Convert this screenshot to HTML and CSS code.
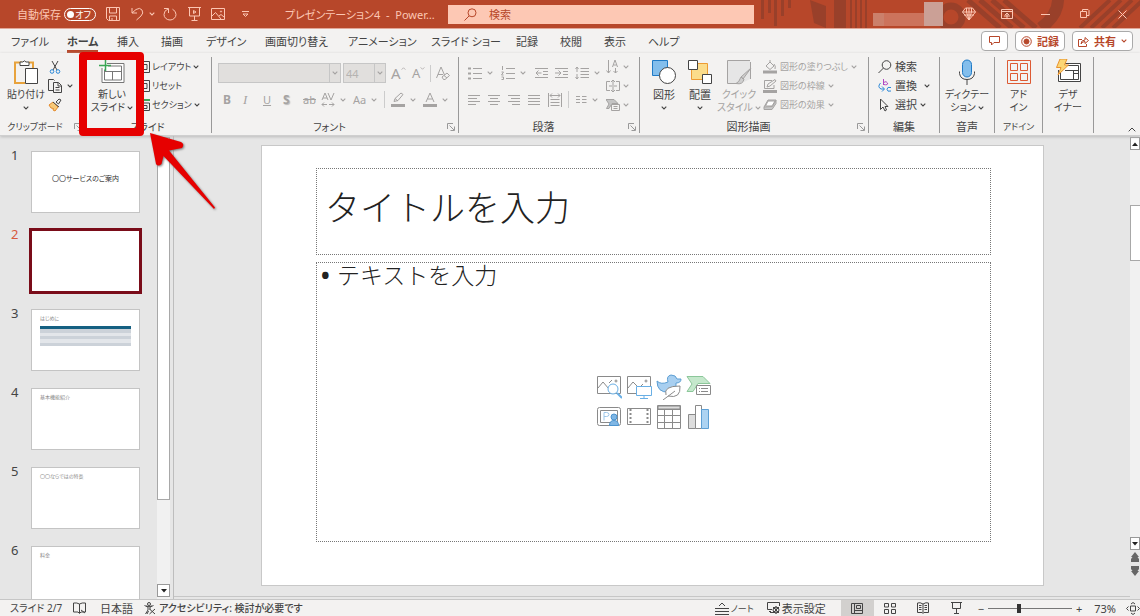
FILE: index.html
```html
<!DOCTYPE html>
<html lang="ja">
<head>
<meta charset="utf-8">
<title>プレゼンテーション4 - PowerPoint</title>
<link rel="stylesheet" href="styles.css">
</head>
<body>
<svg class="defs" aria-hidden="true">
  <symbol id="chev" viewBox="0 0 6 4"><path d="M.7.7 3 3 5.300.7" fill="none" stroke="currentColor" stroke-width="1.1"/></symbol>
  <symbol id="launch" viewBox="0 0 8 8"><path d="M.5 6V.5H6M2.500 2.500 7 7M7.500 3.500v4h-4" fill="none" stroke="currentColor"/></symbol>
</svg>
<div class="app">
  <header class="titlebar">
    <svg class="pattern" viewBox="0 0 390 28" aria-hidden="true">
      <g fill="#99402a"><path d="M11 0h3v19h-3zM18 0h3v13h-3zM24 0h3v26h-3zM31 0h3v16h-3zM38 0h3v8h-3zM60 0l16 6v22l-12-5zM84 0h12v28H84zM100 0h2v28h-2zM105 0h2v28h-2zM110 0h2v28h-2zM115 0h2v28h-2z"/></g>
      <g fill="none" stroke="#99402a"><circle cx="201" cy="17" r="11" stroke-width="7"/><path d="M218 0l32 28M230 0l32 28M242 0l32 28M254 0l32 28" stroke-width="5"/><path d="M308-2q1 16-17 30" stroke-width="12"/><path d="M330 28L360 0M341 28L371 0M352 28L382 0M363 28L393 0" stroke-width="4"/></g>
    </svg>
    <div class="quick">
      <label class="autosave">自動保存
        <input type="checkbox" class="sr"><span class="toggle"><i></i>オフ</span></label>
      <button aria-label="上書き保存"><svg width="14" height="14" viewBox="0 0 14 14"><path d="M.5.5h13v13h-11l-2-2zM3.500.5V6h7V.5M3.500 13.500V9h7v4.500M6 13v-2"/></svg></button>
      <button aria-label="元に戻す"><svg width="13" height="14" viewBox="0 0 13 14"><path d="M1 1v5h5M1 6l4-3.500q4-2.500 6 .5t-1 6L5.500 13"/></svg></button>
      <button aria-label="元に戻すの一覧"><svg class="c"><use href="#chev"/></svg></button>
      <button aria-label="やり直し"><svg width="14" height="14" viewBox="0 0 14 14"><path d="M1 1.500h4.500V6M5 2Q1 3.500 1 7.500A6 5.500 0 0 0 13 7.500Q13 4 9.500 2.200"/></svg></button>
      <button aria-label="先頭から開始"><svg width="13" height="14" viewBox="0 0 13 14"><path d="M0 .5h13M1.500 1v8h10V1M6.500 9v4M3.500 13.500h6M5.500 3.500v3l2.500-1.500z"/></svg></button>
      <button aria-label="図を挿入"><svg width="14" height="12" viewBox="0 0 14 12"><path d="M.5.5h13v11H.5zM1 8l3.500-3.500L10 11M8 8l2-1.500L13 9"/><circle cx="10" cy="3.500" r=".6"/></svg></button>
      <button aria-label="クイック アクセスのカスタマイズ"><svg width="7" height="7" viewBox="0 0 7 7"><path d="M0 .5h7M1 3l2.500 2.500L6 3z"/></svg></button>
      <span class="doc">プレゼンテーション4&nbsp; -&nbsp; Power…</span>
    </div>
    <label class="search"><svg width="13" height="13" viewBox="0 0 13 13"><circle cx="8" cy="4.800" r="4"/><path d="M5 8L.5 12.500"/></svg><input type="search" aria-label="検索" placeholder="検索"></label>
    <div class="winctl">
      <span class="account"><i></i><i></i><i></i></span>
      <button aria-label="Premium"><svg width="14" height="14" viewBox="0 0 14 14"><path d="M3.500 1h7L13.500 5 7 13 .5 5zM.5 5h13M4.500 1v4L7 13l2.500-8V1M7 1v12M2 8h10"/></svg></button>
      <button aria-label="リボンの表示オプション"><svg width="12" height="10" viewBox="0 0 12 10"><path d="M.5.5h11v9H.5zM.5 2.500h11M6 9V4M4 6l2-2 2 2M3 7h6"/></svg></button>
      <button aria-label="最小化"><svg width="9" height="9" viewBox="0 0 9 9"><path d="M0 4.500h9"/></svg></button>
      <button aria-label="元に戻す(縮小)"><svg width="10" height="10" viewBox="0 0 10 10"><path d="M.5 2.500h6v6h-6zM2.500 2V.5H8l1 1v5H7"/></svg></button>
      <button aria-label="閉じる"><svg width="9" height="9" viewBox="0 0 9 9"><path d="M.5.5l8 8M8.500.5l-8 8"/></svg></button>
    </div>
  </header>

  <nav class="tabs">
    <div class="tablist">
      <a href="#">ファイル</a><a href="#" class="on">ホーム</a><a href="#">挿入</a><a href="#">描画</a><a href="#">デザイン</a><a href="#">画面切り替え</a><a href="#">アニメーション</a><a href="#">スライド ショー</a><a href="#">記録</a><a href="#">校閲</a><a href="#">表示</a><a href="#">ヘルプ</a>
    </div>
    <div class="actions">
      <button aria-label="コメント"><svg width="11" height="10" viewBox="0 0 11 10"><path d="M.5.5h10v6H5L2.500 9V6.500h-2z"/></svg></button>
      <button><svg width="11" height="11" viewBox="0 0 11 11"><circle cx="5.500" cy="5.500" r="4.800"/><circle cx="5.500" cy="5.500" r="2.500" fill="currentColor"/></svg>記録</button>
      <button><svg width="11" height="11" viewBox="0 0 11 11"><path d="M4 3.500H.5v7h8V8M3 8q0-4 4-4V1.500l3.500 3L7 7.500V5.500Q4.500 5.500 3 8z"/></svg>共有<svg class="c"><use href="#chev"/></svg></button>
    </div>
  </nav>

  <section class="ribbon">
    <div class="group g-clip">
      <div class="body">
        <button class="big"><svg width="26" height="26" viewBox="0 0 26 26"><path d="M9 3.500H2v20.500h10M16 3.500h4V9" stroke="#e8a33d" stroke-width="2"/><path d="M7 6.500V3h3q1-2.500 3 0h3v3.500z" fill="#fff"/><path d="M12.500 9.500h12v15h-12z" fill="#fff"/></svg>貼り付け<svg class="c low"><use href="#chev"/></svg></button>
        <div class="stack">
          <button aria-label="切り取り"><svg width="14" height="14" viewBox="0 0 14 14"><path d="M4 1l5 9M10 1L5 10"/><circle cx="4" cy="11.500" r="1.800" stroke="#2b88d8"/><circle cx="10" cy="11.500" r="1.800" stroke="#2b88d8"/></svg></button>
          <button aria-label="コピー"><svg width="14" height="14" viewBox="0 0 14 14"><path d="M5 11.500H.5V.5h5l1 1M5.500 3.500h5l3 3v7h-8zM10 4v3h3M7.500 8.500h4M7.500 11h4"/></svg><svg class="c"><use href="#chev"/></svg></button>
          <button aria-label="書式のコピー"><svg width="14" height="14" viewBox="0 0 14 14"><path d="M8 4l3-3 2 1-2.500 4z" /><path d="M1 7l4-3 5 5-3 4-2-1 .5-1.500L3 10z" fill="#f7c978" stroke="#e58a2a"/><path d="M5 4l6 5"/></svg></button>
        </div>
      </div>
      <div class="cap"><span>クリップボード</span><svg class="l"><use href="#launch"/></svg></div>
    </div>
    <div class="group g-slide">
      <div class="body">
        <button class="big"><svg width="26" height="26" viewBox="0 0 26 26"><path d="M8 4.500h17v19H3V9" fill="#fff" stroke="#777"/><path d="M5.500 10.500v10.500h17V7H9M5.500 12.500h17M13.500 12.500V21" stroke="#777"/><path d="M0 6.500h12M6.500 1v11" stroke="#3aa655" stroke-width="1.500"/></svg>新しい<span>スライド<svg class="c"><use href="#chev"/></svg></span></button>
        <div class="stack">
          <button><svg width="10" height="12" viewBox="0 0 10 12"><path d="M0 .5h9.500v11H0M0 3.500h7v5H0"/></svg>レイアウト<svg class="c"><use href="#chev"/></svg></button>
          <button><svg width="10" height="12" viewBox="0 0 10 12"><path d="M0 .5h9.500v11H0M0 3.500h7v5H0"/></svg>リセット</button>
          <button><svg width="10" height="12" viewBox="0 0 10 12"><path d="M0 1h10" stroke="#3aa655" stroke-width="2"/><path d="M0 4h9.500v7.500H0M0 6.500h7v3H0"/></svg>セクション<svg class="c"><use href="#chev"/></svg></button>
        </div>
      </div>
      <div class="cap"><span>スライド</span></div>
    </div>
    <div class="group g-font off">
      <div class="body">
        <div class="frow1">
          <span class="sel"><select aria-label="フォント"><option></option></select><svg class="c"><use href="#chev"/></svg></span>
          <span class="sel"><select aria-label="フォント サイズ"><option>44</option></select><svg class="c"><use href="#chev"/></svg></span>
          <button aria-label="フォント サイズの拡大"><b class="ga">A</b><svg class="up" width="5" height="3" viewBox="0 0 6 4"><path d="M.5 3.500L3 1l2.500 2.500"/></svg></button>
          <button aria-label="フォント サイズの縮小"><b class="gb">A</b><svg class="up" width="5" height="3" viewBox="0 0 6 4"><path d="M.5.5L3 3 5.500.5"/></svg></button>
          <i class="sep"></i>
          <button aria-label="書式のクリア"><svg width="14" height="15" viewBox="0 0 14 15"><path d="M.5 12L5 1l3.500 8M2 8.500h5M6 11l5-4 2.500 2.500-4.500 4H7.500zM8 9.500l3 2.500" /></svg></button>
        </div>
        <div class="frow2">
          <button aria-label="太字"><b class="tb">B</b></button><button aria-label="斜体"><i class="ti">I</i></button><button aria-label="下線"><u>U</u></button><button aria-label="影"><b class="ts">S</b></button><button aria-label="取り消し線"><s>ab</s></button>
          <button aria-label="文字の間隔"><svg width="14" height="15" viewBox="0 0 14 15"><path d="M1 8L4 1l3 7M2 6h4M7 1l3 7 3-7M1 12.500h5M8 12.500h5M3 10.500l-2 2 2 2M11 10.500l2 2-2 2"/></svg><svg class="c"><use href="#chev"/></svg></button>
          <button aria-label="文字種の変換">Aa<svg class="c"><use href="#chev"/></svg></button><i class="sep"></i>
          <button aria-label="蛍光ペン"><svg width="14" height="15" viewBox="0 0 14 15"><path d="M0 13.500h14" stroke-width="3"/><path d="M3 9.500l1-3 6-5.500 2 1.500-5 6zM4 6.500L7 9"/></svg><svg class="c"><use href="#chev"/></svg></button>
          <button aria-label="フォントの色"><svg width="14" height="15" viewBox="0 0 14 15"><path d="M0 13.500h14" stroke-width="3"/><path d="M3 10L7 1l4 9M4.500 7h5"/></svg><svg class="c"><use href="#chev"/></svg></button>
        </div>
      </div>
      <div class="cap"><span>フォント</span><svg class="l"><use href="#launch"/></svg></div>
    </div>
    <div class="group g-para off">
      <div class="body">
        <div class="prows">
          <div class="prow1">
            <button aria-label="箇条書き"><svg width="14" height="14" viewBox="0 0 14 14"><path d="M0 2.500h3M0 7.500h3M0 12.500h3" stroke-width="2"/><path d="M5 2.500h9M5 7.500h9M5 12.500h9"/></svg><svg class="c"><use href="#chev"/></svg></button>
            <button aria-label="段落番号"><svg width="14" height="14" viewBox="0 0 14 14"><path d="M1.500 0v4M.5 6h2l-2 3h2M.5 11h2v2.500h-2M5 2.500h9M5 7.500h9M5 12.500h9"/></svg><svg class="c"><use href="#chev"/></svg></button>
            <button aria-label="インデントを減らす"><svg width="13" height="12" viewBox="0 0 13 12"><path d="M0 1.500h13M8 4.500h5M8 7.500h5M0 10.500h13M1 6h5.500M3.500 3.500L1 6l2.500 2.500"/></svg></button>
            <button aria-label="インデントを増やす"><svg width="13" height="12" viewBox="0 0 13 12"><path d="M0 1.500h13M8 4.500h5M8 7.500h5M0 10.500h13M0 6h6M3.500 3.500L6 6 3.500 8.500"/></svg></button>
            <button aria-label="行間"><svg width="14" height="14" viewBox="0 0 14 14"><path d="M5.500 2.500H14M5.500 5.500H14M5.500 8.500H14M5.500 11.500H14M2 1v5M.5 3L2 1l1.500 2M2 8v5M.5 11L2 13l1.500-2"/></svg><svg class="c"><use href="#chev"/></svg></button>
          </div>
          <div class="prow2">
            <button aria-label="左揃え"><svg width="13" height="12" viewBox="0 0 13 12"><path d="M0 1.500h12M0 4.500h9M0 7.500h12M0 10.500h8"/></svg></button>
            <button aria-label="中央揃え"><svg width="13" height="12" viewBox="0 0 13 12"><path d="M0 1.500h12M2 4.500h8M0 7.500h12M2 10.500h8"/></svg></button>
            <button aria-label="右揃え"><svg width="13" height="12" viewBox="0 0 13 12"><path d="M0 1.500h12M3 4.500h9M0 7.500h12M4 10.500h8"/></svg></button>
            <button aria-label="両端揃え"><svg width="13" height="12" viewBox="0 0 13 12"><path d="M0 1.500h12M0 4.500h12M0 7.500h12M0 10.500h12"/></svg></button>
            <button aria-label="均等割り付け"><svg width="14" height="14" viewBox="0 0 14 14"><path d="M.5 0v14M13.500 0v14M2 2.500h10M4 .5l-2 2 2 2M10 .5l2 2-2 2M2.500 6.500h9M2.500 9.500h9M2.500 12.500h9"/></svg></button>
            <i class="sep"></i>
            <button aria-label="段組み"><svg width="11" height="8" viewBox="0 0 11 8"><path d="M0 .5h4M6 .5h4.500M0 3.500h4M6 3.500h4.500M0 6.500h4M6 6.500h4.500"/></svg><svg class="c"><use href="#chev"/></svg></button>
          </div>
        </div>
        <div class="stack">
          <button aria-label="文字列の方向"><svg width="14" height="14" viewBox="0 0 14 14"><path d="M2.500 0v13M.5 10.500l2 2.500 2-2.500M9.500 8v5M7.500 11l2 2 2-2M6.500 7L9 0l2.500 7M7.500 5h3"/></svg><svg class="c"><use href="#chev"/></svg></button>
          <button aria-label="文字の配置"><svg width="14" height="14" viewBox="0 0 14 14"><path d="M4 2.500H.5v9H4M10 2.500h3.500v9H10M7 1v5M5 3l2-2 2 2M7 8v5M5 11l2 2 2-2M3 7h8"/></svg><svg class="c"><use href="#chev"/></svg></button>
          <button aria-label="SmartArt に変換"><svg width="14" height="12" viewBox="0 0 14 12"><path d="M0 .5h8l4 4H6l-3 5H.5L3 5z" fill="#c4c4c4"/><path d="M5.500 5.500h8v6h-8zM7.500 7.500h4M7.500 9.500h4" fill="#f3f2f1"/></svg><svg class="c"><use href="#chev"/></svg></button>
        </div>
      </div>
      <div class="cap"><span>段落</span><svg class="l"><use href="#launch"/></svg></div>
    </div>
    <div class="group g-draw">
      <div class="body">
        <button class="big"><svg width="26" height="26" viewBox="0 0 26 26"><path d="M1.500 1.500h15v15h-15z" fill="#83beec" stroke="#1f7ac6"/><circle cx="16.500" cy="16.500" r="8" fill="#fff"/></svg><span class="kanji">図形</span><svg class="c low"><use href="#chev"/></svg></button>
        <button class="big"><svg width="26" height="26" viewBox="0 0 26 26"><path d="M4.500 4.500h16v16h-16z" fill="#fbdc8b" stroke="#ed9b33"/><path d="M1.500 1.500h9v9h-9zM15.500 15.500h9v9h-9z" fill="#fff"/></svg><span class="kanji">配置</span><svg class="c low"><use href="#chev"/></svg></button>
        <button class="big off"><svg width="26" height="26" viewBox="0 0 26 26"><path d="M24 1.500H1.500v23h9M24.500 3v17" fill="none"/><path d="M2 2h22v18l-8 4H2z" fill="#e6e6e6" stroke="none"/><path d="M25 9l-8 11-2-2zM15 18l3 2q-1 6-8 4.500 3-1 5-6.500z" fill="#cfcfcf"/></svg>クイック<span>スタイル<svg class="c"><use href="#chev"/></svg></span></button>
        <div class="stack off">
          <button><svg width="14" height="14" viewBox="0 0 14 14"><path d="M0 12h14" stroke-width="3"/><path d="M3 6l4-4 4 4-4 3.500zM7 2V0M11 4q2 2 1 5"/></svg>図形の塗りつぶし<svg class="c"><use href="#chev"/></svg></button>
          <button><svg width="14" height="14" viewBox="0 0 14 14"><path d="M0 12.500h14" stroke-width="3"/><path d="M9 1.500H1.500v8H11V6M4 8l1-3 7-4.500L13 2 7 7z"/></svg>図形の枠線<svg class="c"><use href="#chev"/></svg></button>
          <button><svg width="14" height="14" viewBox="0 0 14 14"><path d="M1 9l4-7h8L9.500 8.500zM1 9v2.500h8l4-6V2" fill="#c8c8c8"/><path d="M5 3h7L9 8H2.500z" fill="#fff"/></svg>図形の効果<svg class="c"><use href="#chev"/></svg></button>
        </div>
      </div>
      <div class="cap kanji"><span>図形描画</span><svg class="l"><use href="#launch"/></svg></div>
    </div>
    <div class="group g-edit">
      <div class="body"><div class="stack">
        <button><svg width="14" height="14" viewBox="0 0 14 14"><circle cx="8.500" cy="5" r="4.300"/><path d="M5.500 8L.5 13"/></svg>検索</button>
        <button><svg width="14" height="14" viewBox="0 0 14 14"><path d="M5.500 0v6M5.500 3.500q3-2 4 .5T5.500 5.500" stroke="#b146c2"/><path d="M13 8.500q-4-1-4 1.800t4 1.700M2.500 4Q-1 8 3 10h3M4 7.500L6.500 10 4 12.500" stroke="#2b88d8"/></svg>置換<svg class="c far"><use href="#chev"/></svg></button>
        <button><svg width="14" height="14" viewBox="0 0 14 14"><path d="M2.500 1v10.500L5 9l2 4 1.500-1-1.500-3.500h3z"/></svg>選択<svg class="c"><use href="#chev"/></svg></button>
      </div></div>
      <div class="cap"><span>編集</span></div>
    </div>
    <div class="group g-voice">
      <div class="body"><button class="big"><svg width="26" height="26" viewBox="0 0 26 26"><rect x="8.500" y="1" width="9" height="17" rx="4.500" fill="#83beec" stroke="#1f7ac6"/><path d="M5.500 12.500v2q1 6 7.500 6t7.500-6v-2M13 20.500V26"/></svg>ディクテー<span>ション<svg class="c"><use href="#chev"/></svg></span></button></div>
      <div class="cap"><span>音声</span></div>
    </div>
    <div class="group g-addin">
      <div class="body"><button class="big"><svg width="26" height="26" viewBox="0 0 26 26"><path d="M1.500 1.500h23v23h-23zM4.500 4.500h7v7h-7zM14.500 4.500h7v7h-7zM4.500 14.500h7v7h-7zM14.500 14.500h7v7h-7z" stroke="#dd5a33"/></svg>アド<span>イン</span></button></div>
      <div class="cap"><span>アドイン</span></div>
    </div>
    <div class="group g-design">
      <div class="body"><button class="big"><svg width="26" height="26" viewBox="0 0 26 26"><path d="M3.500 11v11.500h22v-18H10" fill="#fff"/><path d="M5.500 13v7.500h18V6.500H11M10 11.500h13M18.500 11.500v9M18.500 14.500h5"/><path d="M5 0h7L9.500 6h4L3 16l3-7.500H1.500z" fill="#fbd675" stroke="#e8912d"/></svg>デザ<span>イナー</span></button></div>
      <div class="cap"></div>
    </div>
    <button class="collapse" aria-label="リボンを折りたたむ"><svg width="8" height="5" viewBox="0 0 8 5"><path d="M.7 4.300L4 1l3.300 3.300"/></svg></button>
    <div class="mark" aria-hidden="true"></div>
    <svg class="arrow" width="70" height="80" viewBox="0 0 70 80" aria-hidden="true"><path d="M1 1L32 10Q36 12 33 16L20 18.500 66 75.500 65 77 14.500 24 12.500 32Q9 35 7 32z"/></svg>
  </section>

  <main class="work">
    <aside class="panel">
      <ol class="thumbs">
        <li><span>1</span><div class="th cover">〇〇サービスのご案内</div></li>
        <li class="cur"><span>2</span><div class="th"></div></li>
        <li><span>3</span><div class="th">はじめに<div class="tbl"><i></i><i></i><i></i><i></i><i></i><i></i></div></div></li>
        <li><span>4</span><div class="th">基本機能紹介</div></li>
        <li><span>5</span><div class="th">〇〇ならではの特長</div></li>
        <li><span>6</span><div class="th">料金</div></li>
      </ol>
      <div class="vbar"><i class="knob"></i><button aria-label="下へ"><svg width="6" height="4" viewBox="0 0 6 4"><path d="M0 0h6L3 3.500z"/></svg></button></div>
    </aside>
    <section class="canvas">
      <article class="slide">
        <h1 class="ph">タイトルを入力</h1>
        <div class="ph content">
          <ul><li>テキストを入力</li></ul>
          <div class="inserts">
            <button aria-label="ストック画像"><svg width="26" height="24" viewBox="0 0 26 24"><path d="M1.500 1.500h23v17h-23zM2 13l5-6 6 7M13 8l3-3"/><circle cx="20" cy="6" r="1"/><circle cx="17" cy="14" r="5" fill="#fff" stroke="#69afe5"/><path d="M21 18l5 5" stroke="#69afe5" stroke-width="2"/></svg></button>
            <button aria-label="図"><svg width="26" height="24" viewBox="0 0 26 24"><path d="M1.500 1.500h23v17h-23zM2 13l5-6 6 6 4-4"/><circle cx="20" cy="6" r="1"/><path d="M10.500 11.500h15v9h-15z" fill="#fff" stroke="#69afe5"/><path d="M18 21v2.500M14 23.500h8" stroke="#69afe5"/></svg></button>
            <button aria-label="アイコン"><svg width="26" height="26" viewBox="0 0 26 26"><path d="M1 7q4 4 11 1-2-6 3-7 5 0 6 4h4q0 4-5 4 1 8-7 9Q1 19 1 7z" fill="#a8cff0" stroke="#5d9fd4"/><path d="M10 21q-3-9 14-9 1 13-12 10M7 26l12-9" fill="#fff"/></svg></button>
            <button aria-label="SmartArt"><svg width="26" height="24" viewBox="0 0 26 24"><path d="M1 1.500h16l7 7H12l-5 8H1l5-7.500z" fill="#c5e8cc" stroke="#8cc79a"/><path d="M10.500 10.500h14v9h-14z" fill="#fff"/><path d="M13 13.500h1M15 13.500h7M13 16.500h1M15 16.500h7"/></svg></button>
            <button aria-label="カメオ"><svg width="26" height="24" viewBox="0 0 26 24"><rect x="1.500" y="2.500" width="23" height="18" rx="2"/><path d="M4.500 5.500h17v12h-17z"/><path d="M8 15.500V7.500h2.500q2.500 0 2.500 2t-2.500 2H8" stroke="#9cc6e8"/><circle cx="18" cy="12" r="3" fill="#7fb6e4" stroke="#4c94cf"/><path d="M13.500 20.500q0-5 4.500-5t4.500 5z" fill="#7fb6e4" stroke="#4c94cf"/></svg></button>
            <button aria-label="ビデオ"><svg width="26" height="24" viewBox="0 0 26 24"><path d="M1.500 3.500h23v16h-23z"/><path d="M4.500 4v15M21.500 4v15" stroke-width="2" stroke-dasharray="2 2"/></svg></button>
            <button aria-label="表"><svg width="26" height="26" viewBox="0 0 26 26"><path d="M1.500 1.500h23v23h-23z" fill="#fff"/><path d="M2 2h22v3H2z" fill="#ddd"/><path d="M1.500 5.500h23M1.500 11.500h23M1.500 18.500h23M8.500 5.500v19M16.500 5.500v19"/></svg></button>
            <button aria-label="グラフ"><svg width="26" height="26" viewBox="0 0 26 26"><path d="M2.500 10.500h7v14h-7z" fill="#ddd"/><path d="M9.500 1.500h6v23h-6z" fill="#fff"/><path d="M15.500 5.500h7v19h-7z" fill="#acd3f2" stroke="#5d9fd4"/></svg></button>
          </div>
        </div>
      </article>
    </section>
    <div class="vbar right">
      <button aria-label="上へ"><svg width="6" height="4" viewBox="0 0 6 4"><path d="M0 4h6L3 .5z"/></svg></button>
      <span class="rail"><i class="knob"></i></span>
      <button aria-label="下へ"><svg width="6" height="4" viewBox="0 0 6 4"><path d="M0 0h6L3 3.500z"/></svg></button>
      <button class="pg" aria-label="前のスライド"><svg width="8" height="10" viewBox="0 0 8 10"><path d="M0 5l4-5 4 5H6.500L8 7v3H0V7l1.500-2z"/></svg></button>
      <button class="pg" aria-label="次のスライド"><svg width="8" height="10" viewBox="0 0 8 10"><path d="M0 5l4 5 4-5H6.500L8 3V0H0v3l1.500 2z"/></svg></button>
    </div>
  </main>

  <footer class="status">
    <span class="st-page">スライド 2/7</span>
    <button class="st-book" aria-label="スペル チェック"><svg width="13" height="12" viewBox="0 0 13 12"><path d="M6.500 2v9M6.500 2Q4 .5.5 1v9h4.500l1.500 1.500L8 10l4.500 0V1Q9 .5 6.500 2M8 8l4 3"/></svg></button>
    <button class="st-lang">日本語</button>
    <button class="st-acc"><svg width="12" height="13" viewBox="0 0 12 13"><circle cx="5" cy="2" r="1.500"/><path d="M.5 3.500L4 5v3l-2.500 4M9.500 3.500L6 5v3M2 4l3 .5 3-.5M5.500 7l5.500 5M11 7l-5.500 5M3 12l1.500-3"/></svg>アクセシビリティ: 検討が必要です</button>
    <div class="st-right">
      <button class="st-note"><svg width="14" height="13" viewBox="0 0 14 13"><path d="M4 4l3-3 3 3M0 6.500h14M0 9.500h14M0 12.500h14"/></svg>ノート</button>
      <button class="st-disp"><svg width="13" height="12" viewBox="0 0 13 12"><path d="M4 9.500H2M12.500 4V.5H.5v7H5M3 10.500h3"/><circle cx="9" cy="8" r="3"/><path d="M6 5l6 6M12 5l-6 6M9 4v8"/></svg>表示設定</button>
      <button class="view on" aria-label="標準"><svg width="12" height="11" viewBox="0 0 12 11"><path d="M.5.5h11v10H.5zM3.500.5v10M5.500 2.500h4v3h-4zM3.500 7.500h8"/></svg></button>
      <button class="view" aria-label="スライド一覧"><svg width="12" height="11" viewBox="0 0 12 11"><path d="M.5.5h4v3.500h-4zM7.500.5h4v3.500h-4zM.5 6.500h4v4h-4zM7.500 6.500h4v4h-4z"/></svg></button>
      <button class="view" aria-label="閲覧表示"><svg width="12" height="12" viewBox="0 0 12 12"><path d="M6 2Q3 0 .5 1v9.500H5l1 1 1-1h4.500V1Q9 0 6 2v9M2 3.500h2.500M2 5.500h2.500M2 7.500h2.500M7.500 3.500H10M7.500 5.500H10M7.500 7.500H10"/></svg></button>
      <button class="view" aria-label="スライド ショー"><svg width="11" height="12" viewBox="0 0 11 12"><path d="M0 .5h11M1.500 1v5.500h8V1M5.500 6.500v5M3 11.500h5"/></svg></button>
      <div class="zoom"><button aria-label="縮小">−</button><input type="range" min="10" max="400" value="150" aria-label="ズーム"><button aria-label="拡大">+</button></div>
      <span class="pct">73%</span>
      <button class="fit" aria-label="ウィンドウに合わせる"><svg width="14" height="13" viewBox="0 0 14 13"><path d="M4.500 4h5v5h-5zM5 2l2-1.500L9 2M5 11l2 1.500L9 11M2.500 4.500L.5 6.500l2 2M11.500 4.500l2 2-2 2"/></svg></button>
    </div>
  </footer>
</div>
</body>
</html>
```
FILE: styles.css
```css
:root {
  --brand: #b7472a;
  --pink: #fcc6b3;
  --ink: #444;
  --off: #a5a3a2;
  --bar: #f3f2f1;
}
* { box-sizing: border-box; }
body {
  margin: 0;
  color: var(--ink);
  font: 11px/13px "Noto Sans", "Noto Sans CJK JP", sans-serif;
  font-feature-settings: "palt";
}
button, input, select { font: inherit; font-feature-settings: inherit; color: inherit; }
button { margin: 0; padding: 0; border: 0; background: none; white-space: nowrap; }
svg { flex: none; display: block; fill: none; stroke: currentColor; }
.defs { position: absolute; width: 0; height: 0; }
.sr { position: absolute; opacity: 0; width: 1px; height: 1px; margin: 0; }
.c { width: 6px; height: 4px; stroke: none; }
.l { width: 8px; height: 8px; stroke: none; color: #999; }
.app { height: 100vh; display: flex; flex-direction: column; overflow: hidden; }

/* Title bar */
.titlebar {
  position: relative;
  display: grid;
  grid-template-columns: 448px 1fr 386px;
  align-items: center;
  height: 29px;
  background: var(--brand);
  border-bottom: 1px solid #e1a798;
  color: var(--pink);
}
.pattern { position: absolute; right: 0; top: 0; width: 390px; height: 28px; stroke: none; }
.quick { display: grid; grid-template-columns: 89px 25px 18px 14px 25px 23px 31px 43px 1fr; align-items: center; padding-left: 17px; }
.quick button { display: flex; }
.doc { white-space: nowrap; }
.autosave { display: flex; align-items: center; gap: 3px; white-space: nowrap; }
.toggle { display: flex; align-items: center; justify-content: space-between; width: 32px; height: 13px; padding: 0 4px 0 2px; border: 1px solid #fff; border-radius: 7px; color: #fff; font-size: 9px; line-height: 11px; }
.toggle i { width: 7px; height: 7px; border-radius: 50%; background: #fff; }
.search { position: relative; display: flex; align-items: center; gap: 12px; height: 19px; padding-left: 16px; background: #fdc8b4; color: var(--brand); }
.search input { flex: 1; min-width: 0; height: 17px; padding: 0; border: 0; outline: 0; background: none; }
.search input::placeholder { color: #b7472a; opacity: 1; }
.winctl { position: relative; display: grid; grid-template-columns: 70px 1fr 39px 39px 39px 36px; align-items: center; padding-left: 119px; height: 28px; }
.winctl button { display: flex; justify-content: center; }
.winctl button:nth-child(2) { padding-left: 8px; }
.account { display: grid; grid-template-columns: 11px 40px 19px; align-items: end; height: 24px; }
.account i { height: 13px; background: #cc735c; }
.account i:first-child { background: #cb806b; }
.account i:last-child { height: 24px; background: #cba096; }

/* Tabs */
.tabs { display: flex; justify-content: space-between; height: 24px; padding-left: 11px; background: var(--bar); }
.tablist { display: grid; grid-template-columns: 56px 50px 44px 45px 59px 83px 83px 85px 44px 44px 44px auto; }
.tablist a { justify-self: start; padding-top: 6px; color: inherit; text-decoration: none; white-space: nowrap; }
.tablist .on { font-weight: 700; border-bottom: 3px solid var(--brand); }
.actions { display: flex; gap: 7px; padding: 2px 7px 2px 0; color: var(--brand); font-weight: 700; }
.actions button { display: flex; align-items: center; justify-content: center; gap: 5px; min-width: 27px; height: 20px; padding: 0 5px; border: 1px solid #aaa; border-radius: 4px; background: #fff; }

/* Ribbon */
.ribbon { position: relative; z-index: 2; display: flex; padding: 4px 0 2px; background: var(--bar); border-bottom: 1px solid #cfcfcf; box-shadow: 0 1px 3px #bbb; font-size: 10px; }
.kanji, .g-edit, .g-voice .cap, .g-para .cap { font-size: 11px; }
.group { display: grid; grid-template-rows: 64px 12px; border-right: 1px solid #999; flex: none; }
.body { display: flex; }
.cap { display: flex; align-items: center; line-height: 12px; white-space: nowrap; }
.cap span { flex: 1; text-align: center; }
.cap .l { margin-right: 3px; }
.off { color: var(--off); }
.off .cap { color: var(--ink); }
.big { display: flex; flex-direction: column; align-items: center; align-self: start; padding-top: 2px; }
.big > svg:first-child { margin-bottom: 3px; }
.big > span { display: flex; align-items: center; gap: 2px; }
.big .low { margin-top: 5px; }
.stack { display: grid; grid-template-rows: repeat(3, 19px); align-content: start; }
.stack button { display: flex; align-items: center; gap: 3px; }
.sep { width: 1px; height: 17px; background: #ccc; }
.g-clip { width: 84px; }
.g-clip .body { padding-left: 8px; gap: 4px; }
.g-clip .big { width: 36px; }
.g-clip .stack button { gap: 5px; }
.g-clip .cap { font-size: 9px; }
.g-clip .cap span { padding-right: 4px; }
.g-clip .cap .l { margin-right: 1px; }
.g-slide { width: 128px; }
.g-slide .body { padding-left: 6px; gap: 6px; }
.g-slide .big { width: 44px; }
.g-slide .stack { font-size: 9px; }
.g-slide .stack button { gap: 2px; }
.g-font { width: 247px; }
.g-font .body { flex-direction: column; padding: 6px 0 0 6px; gap: 6px; font-size: 11px; }
.frow1 { display: grid; grid-template-columns: 125px 48px 21px 18px 6px auto; align-items: center; justify-content: start; height: 20px; }
.frow1 button { display: flex; justify-self: start; }
.ga { font-size: 15px; font-weight: 400; }
.gb { font-size: 13px; font-weight: 400; }
.sel { position: relative; margin-right: 2px; }
.sel + .sel { margin-right: 5px; }
.sel select { display: block; width: 100%; height: 20px; padding: 0 2px; border: 1px solid #c6c6c6; border-radius: 0; background: #e1dfdd; appearance: none; color: #b5b3b1; }
.sel .c { position: absolute; right: 3px; top: 8px; }
.sel::after { content: ""; position: absolute; right: 11px; top: 0; width: 1px; height: 20px; background: #c6c6c6; }
.frow2 { display: grid; grid-template-columns: 20px 20px 20px 20px 18px 32px 31px 7px 32px auto; align-items: center; justify-content: start; height: 21px; padding-left: 5px; }
.frow2 button { display: flex; align-items: center; gap: 5px; }
.tb, .ts { font-size: 12px; }
.ti { font-family: "Liberation Serif", serif; font-size: 13px; }
.ts { text-shadow: 1px 1px 1px #bbb; }
.g-para { width: 181px; }
.g-para .body { padding: 0 0 0 9px; }
.prows { display: grid; grid-template-rows: 20px 21px; gap: 6px; padding-top: 6px; width: 138px; align-content: start; }
.prow1, .prow2 { display: grid; align-items: center; justify-content: start; }
.prow1 { grid-template-columns: 33px 34px 20px 20px auto; }
.prow2 { grid-template-columns: 20px 20px 20px 20px 20px 8px auto; }
.prows button { display: flex; align-items: center; gap: 5px; }
.g-draw { width: 229px; }
.g-draw .body { padding-left: 6px; }
.g-draw .big { width: 36px; }
.g-draw .big.off { width: 42px; }
.g-draw .stack { padding-left: 3px; font-size: 9px; }
.g-edit { width: 71px; }
.g-edit .body { padding-left: 9px; }
.g-edit .stack button { gap: 3px; }
.g-edit .far { margin-left: 4px; }
.g-voice { width: 55px; }
.g-addin { width: 48px; }
.g-addin .cap { font-size: 9px; }
.g-design { width: 51px; }
.g-voice .body, .g-addin .body, .g-design .body { justify-content: center; }
.collapse { margin: auto 4px 1px auto; }
.mark { position: absolute; left: 79px; top: -1px; width: 65px; height: 84px; border: 8px solid #e60000; border-radius: 4px; }
.arrow { position: absolute; left: 149px; top: 79px; fill: #e60000; stroke: none; filter: drop-shadow(1px 1px 1px #777); }

/* Work area */
.work { flex: 1; min-height: 0; display: grid; grid-template-columns: 174px 1fr 10px; background: #e6e6e6; }
.panel { display: grid; grid-template-columns: 1fr 13px; min-height: 0; padding-right: 3px; border-right: 1px solid #bdbdbd; }
.thumbs { margin: 0; padding: 15px 0 0 11px; overflow: hidden; list-style: none; }
.thumbs li { display: grid; grid-template-columns: 20px 109px; height: 79px; }
.thumbs span { font-size: 13px; line-height: 9px; }
.th { height: 62px; padding: 5px 8px; border: 1px solid #c4c4c4; background: #fff; color: #888; font-size: 5px; line-height: 7px; white-space: nowrap; }
.cover { display: grid; place-content: center; padding: 0 0 8px; color: #333; font-size: 7px; }
.cur span { color: #d8593b; }
.cur .th { outline: 3px solid #7a0c19; outline-offset: -1px; }
.tbl { display: grid; grid-template-rows: repeat(6, 1fr); height: 20px; margin-top: 4px; }
.tbl i { background: #e3e6ea; }
.tbl i:nth-child(even) { background: #ccd2d9; }
.tbl i:first-child { background: #156082; }
.vbar { display: flex; flex-direction: column; min-height: 0; padding: 1px 0 2px; background: #f1f1f1; }
.vbar .knob { height: 363px; border: 1px solid #a8a8a8; background: #fff; }
.vbar button { display: flex; align-items: center; justify-content: center; height: 13px; border: 1px solid #999; background: #fff; color: #222; }
.vbar svg { fill: currentColor; stroke: none; }
.panel .vbar button { margin-top: auto; }
.vbar.right { padding-bottom: 21px; background: #e6e6e6; }
.rail { flex: 1; padding-top: 55px; background: #f1f1f1; }
.rail .knob { display: block; height: 56px; border-right: 0; }
.vbar .pg { height: 14px; border: 0; background: none; color: #666; }
.canvas { display: flex; min-height: 0; margin-bottom: 2px; padding: 9px 86px 10px 87px; border-bottom: 1px solid #c6c6c6; }
.slide { flex: 1; display: flex; flex-direction: column; gap: 7px; padding: 22px 52px 43px 54px; border: 1px solid #c8c8c8; background: #fff; color: #222; }
.ph { margin: 0; border: 1px dotted #777; }
h1.ph { height: 87px; padding: 18px 8px; font-size: 35px; line-height: 41px; font-weight: 300; font-feature-settings: normal; }
.content { position: relative; flex: 1; min-height: 0; font-size: 23px; line-height: 24px; font-weight: 300; font-feature-settings: normal; }
.content ul { margin: 0; padding: 0 0 0 20px; list-style: none; }
.content li::before { content: "•"; float: left; width: 16px; margin-left: -16px; font-weight: 700; }
.inserts { position: absolute; inset: 0; display: grid; grid-template-columns: repeat(4, 26px); grid-auto-rows: 26px; gap: 4px; place-content: center; color: #8a8a8a; }
.inserts button { display: grid; place-items: center; }

/* Status bar */
.status { display: flex; align-items: center; height: 17px; padding-left: 10px; border-top: 1px solid #c6c6c6; background: var(--bar); white-space: nowrap; }
.st-page { width: 63px; font-size: 10px; }
.st-book { width: 27px; }
.st-lang { width: 44px; text-align: left; }
.st-acc { display: flex; align-items: center; gap: 3px; font-size: 10px; font-weight: 500; }
.st-right { display: flex; align-items: center; height: 16px; margin-left: auto; }
.st-right button { display: flex; align-items: center; justify-content: center; gap: 2px; }
.st-right .st-note { margin-right: 13px; font-size: 9px; }
.st-disp { margin-right: 15px; }
.view { width: 33px; height: 16px; }
.view.on { background: #d2d0ce; }
.zoom { display: flex; align-items: center; gap: 4px; margin-left: 5px; }
.zoom input { appearance: none; width: 84px; height: 11px; margin: 0; background: linear-gradient(#777, #777) center / 100% 1px no-repeat; }
.zoom input::-webkit-slider-thumb { appearance: none; width: 4px; height: 9px; background: #333; }
.pct { margin: 0 10px 0 12px; }
.st-right .fit { width: 14px; }
```
